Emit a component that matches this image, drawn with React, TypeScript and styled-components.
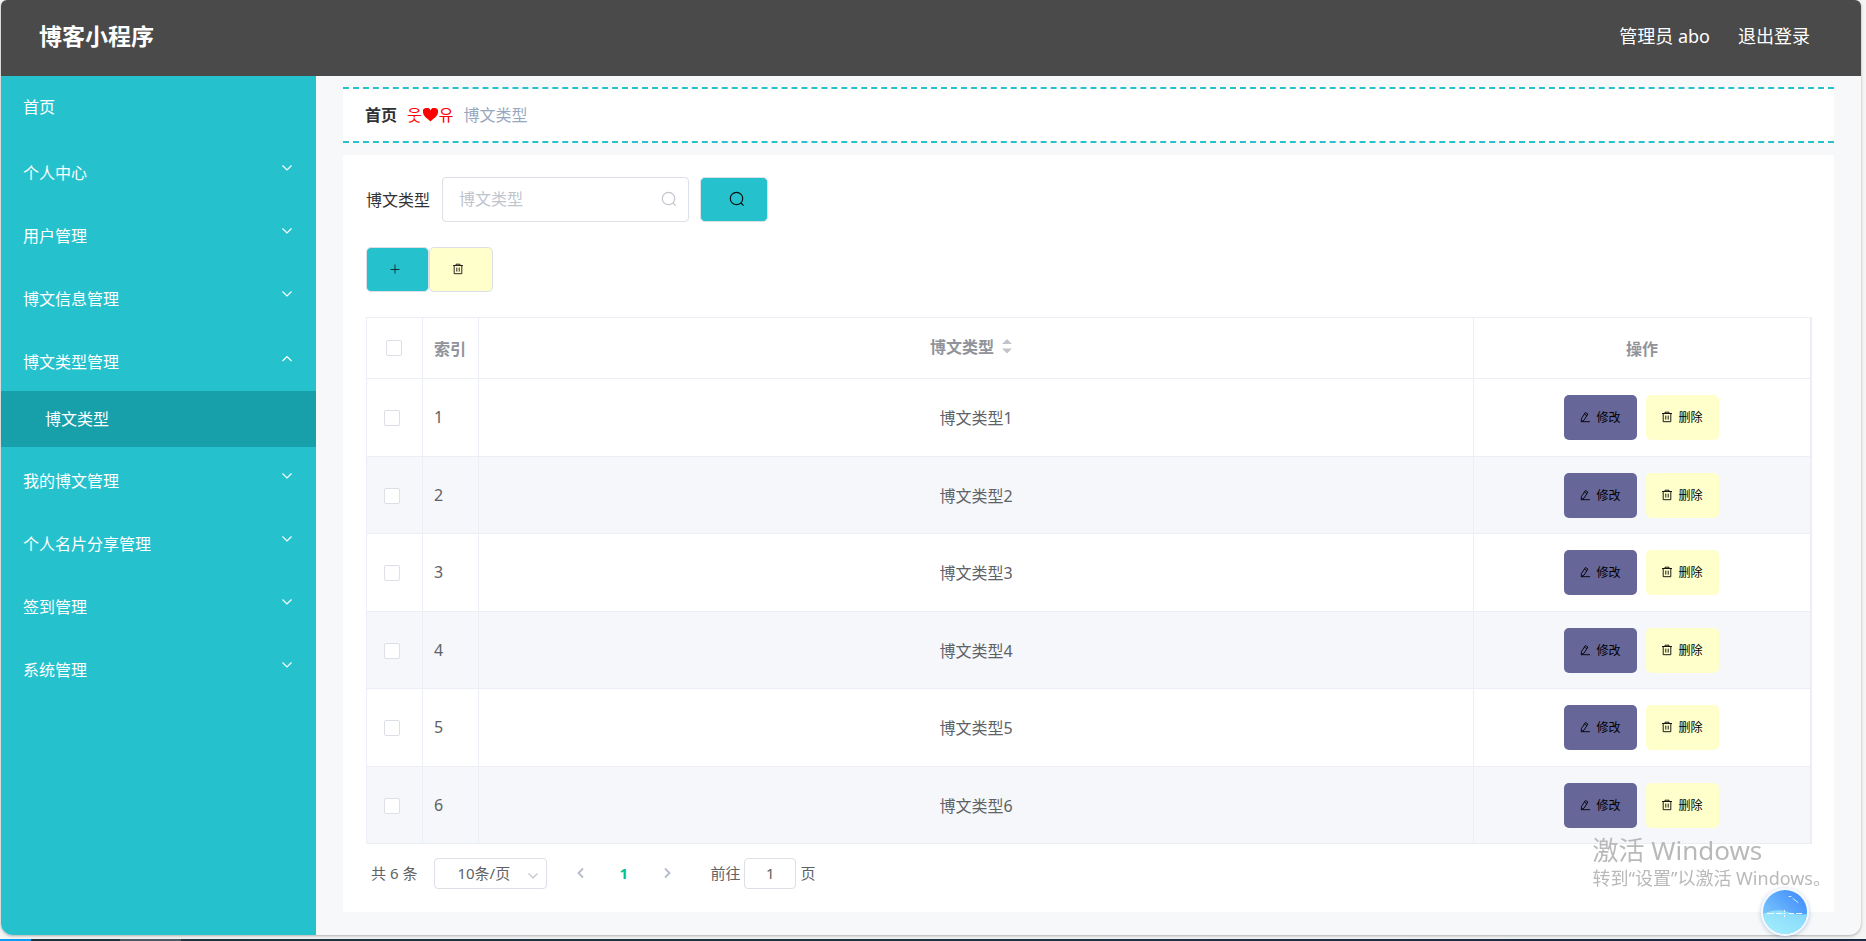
import React, { useState } from "react";
import styled, { createGlobalStyle } from "styled-components";

const teal = "#25c2ce";
const tealDark = "#18a0aa";
const line = "#ebeef5";
const edge = "#dcdfe6";

const Global = createGlobalStyle`
  *, *::before, *::after { box-sizing: border-box; }
  body {
    margin: 0;
    background: #f5f5f5;
    font-family: "Noto Sans", "Noto Sans CJK SC", "Noto Sans CJK KR", sans-serif;
    font-size: 16px;
    color: #303133;
  }
  button, input, select { font-family: inherit; margin: 0; }
  a { color: inherit; text-decoration: none; }
  ul { list-style: none; margin: 0; padding: 0; }
`;

const Page = styled.div`
  min-height: 100vh;
  display: flex;
  flex-direction: column;
`;

const Shell = styled.div`
  flex: 1;
  display: flex;
  flex-direction: column;
  margin: 0 5px 4px 1px;
  border-radius: 6px 6px 12px 12px;
  overflow: hidden;
  background: #f6f8fa;
  box-shadow: 0 1px 3px rgba(0, 0, 0, 0.3);
`;

const Header = styled.header`
  height: 76px;
  padding: 0 51px 4px 38px;
  display: flex;
  align-items: center;
  justify-content: space-between;
  background: #4a4a4a;
  color: #fff;
`;

const Brand = styled.h1`
  margin: 0;
  font-size: 23px;
  line-height: 32px;
  font-weight: 700;
`;

const Account = styled.div`
  display: flex;
  gap: 28px;
  font-size: 18px;
  line-height: 24px;
`;

const Body = styled.div`
  flex: 1;
  display: flex;
`;

const Sidebar = styled.nav`
  width: 315px;
  flex: none;
  background: ${teal};
  color: #fff;
`;

const MenuLink = styled.a`
  display: block;
  height: 63px;
  padding-left: 22px;
  line-height: 63px;
`;

const MenuGroup = styled.button`
  display: flex;
  justify-content: space-between;
  width: 100%;
  height: 63px;
  padding: 6px 23px 0 22px;
  border: 0;
  background: none;
  color: #fff;
  font-size: 16px;
  line-height: 56px;
  text-align: left;
  cursor: pointer;
  svg { margin-top: 17px; }
  &[aria-expanded="true"] svg { margin-top: 19px; }
`;

const SubLink = styled.a`
  display: block;
  height: 56px;
  padding-left: 44px;
  line-height: 56px;
  background: ${tealDark};
`;

const Main = styled.main`
  flex: 1;
  min-width: 0;
  padding: 11px 27px 23px;
  display: flex;
  flex-direction: column;
  gap: 12px;
`;

const Breadcrumb = styled.div`
  display: flex;
  align-items: center;
  gap: 10px;
  height: 56px;
  padding: 0 22px 2px;
  background: #fff;
  border-top: 2px dashed ${teal};
  border-bottom: 2px dashed ${teal};
  a { font-weight: 700; }
`;

const Separator = styled.span`
  color: #f00;
  display: flex;
  align-items: center;
  gap: 1px;
  svg { margin-top: 2px; }
`;

const Current = styled.span`
  color: #97a8be;
`;

const Panel = styled.section`
  flex: 1;
  padding: 22px 22px 23px 23px;
  background: #fff;
`;

const SearchForm = styled.form`
  display: flex;
  align-items: center;
  margin-bottom: 25px;
  label { margin-right: 12px; padding-bottom: 2px; }
`;

const SearchBox = styled.div`
  position: relative;
  width: 247px;
  margin-right: 11px;
  svg { position: absolute; right: 12px; top: 14px; color: #c0c4cc; }
`;

const SearchInput = styled.input`
  display: block;
  width: 100%;
  height: 45px;
  padding: 0 36px 2px 16px;
  border: 1px solid ${edge};
  border-radius: 4px;
  font-size: 16px;
  outline: none;
  &::placeholder { color: #c0c4cc; opacity: 1; }
`;

const ToolButton = styled.button<{ $fill: string; $width: number }>`
  display: flex;
  align-items: center;
  width: ${(p) => p.$width}px;
  height: 45px;
  padding: 0 0 2px ${(p) => (p.$width > 64 ? 28 : 22)}px;
  border: 1px solid ${edge};
  border-radius: 5px;
  background: ${(p) => p.$fill};
  color: #111;
  cursor: pointer;
`;

const Tools = styled.div`
  display: flex;
  margin-bottom: 25px;
`;

const Table = styled.table`
  width: 100%;
  table-layout: fixed;
  border-collapse: separate;
  border-spacing: 0;
  border: solid ${line};
  border-width: 1px 2px 0 1px;
  color: #606266;
  th, td {
    padding: 0 11px 1px;
    border-right: 1px solid ${line};
    border-bottom: 1px solid ${line};
    text-align: center;
    vertical-align: middle;
  }
  th:last-child, td:last-child { border-right: 0; }
  th { height: 61px; color: #909399; font-weight: 700; }
  th:first-child { padding: 0 0 0 19px; }
  td:first-child { padding: 1px 0 0 17px; }
  td:last-child { padding: 0 2px 0 0; }
  th:nth-child(2), td:nth-child(2) { text-align: left; }
  tbody tr:nth-child(odd) td { height: 78px; }
  tbody tr:nth-child(even) td { height: 77px; background: #f5f7fa; }
`;

const Col = styled.col<{ $width?: number }>`
  width: ${(p) => (p.$width ? `${p.$width}px` : "auto")};
`;

const Check = styled.input`
  appearance: none;
  display: block;
  width: 16px;
  height: 16px;
  border: 1px solid ${edge};
  border-radius: 2px;
  background: #fff;
  &:checked { background: ${teal}; border-color: ${teal}; }
`;

const SortButton = styled.button`
  display: inline-flex;
  align-items: center;
  gap: 8px;
  padding: 0 10px 4px 0;
  border: 0;
  background: none;
  color: inherit;
  font-size: 16px;
  font-weight: 700;
  cursor: pointer;
`;

const Actions = styled.div`
  display: flex;
  justify-content: center;
  gap: 9px;
`;

const RowButton = styled.button<{ $fill: string }>`
  display: flex;
  align-items: center;
  justify-content: center;
  gap: 5px;
  width: 73px;
  height: 45px;
  padding: 0 0 1px;
  border: 0;
  border-radius: 5px;
  background: ${(p) => p.$fill};
  color: #000;
  font-size: 12px;
  cursor: pointer;
`;

const Pagination = styled.div`
  display: flex;
  align-items: center;
  margin-top: 14px;
  padding-left: 5px;
  height: 31px;
  font-size: 15px;
  line-height: 20px;
  color: #606266;
  > span { padding-bottom: 2px; }
`;

const SizePicker = styled.div`
  position: relative;
  width: 113px;
  margin: 0 12px 0 17px;
  svg { position: absolute; right: 8px; top: 12px; color: #c0c4cc; pointer-events: none; }
`;

const SizeSelect = styled.select`
  appearance: none;
  display: block;
  width: 100%;
  height: 31px;
  padding: 0 24px 2px 22px;
  border: 1px solid ${edge};
  border-radius: 4px;
  background: #fff;
  color: #606266;
  font-size: 15px;
`;

const PageButton = styled.button<{ $active?: boolean }>`
  display: flex;
  align-items: center;
  justify-content: center;
  width: 43px;
  height: 31px;
  padding: 0 0 1px;
  border: 0;
  background: none;
  color: ${(p) => (p.$active ? "#00c292" : "#b4bccc")};
  font-size: 15px;
  font-weight: 700;
`;

const Jump = styled.label`
  display: flex;
  align-items: center;
  gap: 4px;
  margin-left: 22px;
  > span { padding-bottom: 2px; }
`;

const JumpInput = styled.input`
  width: 52px;
  height: 31px;
  padding: 0 0 2px;
  border: 1px solid ${edge};
  border-radius: 4px;
  color: #606266;
  font-size: 15px;
  text-align: center;
`;

const Watermark = styled.div`
  position: fixed;
  right: 35px;
  bottom: 51px;
  color: #b9b9b9;
  pointer-events: none;
  p { margin: 0; font-size: 18px; line-height: 24px; white-space: nowrap; }
  p:first-child { font-size: 26px; line-height: 32px; }
`;

const FloatBall = styled.button`
  position: fixed;
  right: 57px;
  bottom: 5px;
  width: 48px;
  height: 48px;
  padding: 0;
  border: 2px solid #f4f9ff;
  border-radius: 50%;
  background: none;
  box-shadow: 0 1px 4px rgba(60, 100, 150, 0.35);
  svg { display: block; }
`;

const Taskbar = styled.div`
  display: flex;
  height: 2px;
  background: linear-gradient(90deg, #1d3440, #1f3444 60%, #1b2a45);
`;

const Task = styled.span<{ $fill: string; $width: number; $gap?: number }>`
  width: ${(p) => p.$width}px;
  height: 2px;
  margin-left: ${(p) => p.$gap ?? 0}px;
  background: ${(p) => p.$fill};
`;

const Chevron = ({ d = "M1.5 3.5 6 8l4.5-4.5", size = 12, weight = 1.2 }) => (
  <svg width={size} height={size} viewBox="0 0 12 12" fill="none" stroke="currentColor" strokeWidth={weight} aria-hidden>
    <path d={d} />
  </svg>
);

const SearchIcon = () => (
  <svg width="16" height="16" viewBox="0 0 16 16" fill="none" stroke="currentColor" strokeWidth="1.2" aria-hidden>
    <circle cx="7.5" cy="7.5" r="6.2" />
    <path d="m12 12 2.6 2.6" />
  </svg>
);

const PlusIcon = () => (
  <svg width="12" height="12" viewBox="0 0 12 12" stroke="currentColor" strokeWidth="0.8" aria-hidden>
    <path d="M6 1.5v9M1.5 6.5h9" />
  </svg>
);

const TrashIcon = () => (
  <svg width="12" height="12" viewBox="0 0 12 12" fill="none" stroke="currentColor" strokeWidth="0.9" aria-hidden>
    <path d="M1 2.5h10M4 2.5V1.2h4v1.3M2.2 2.5v8.2h7.6V2.5M4.8 4.6v4M7.2 4.6v4" />
  </svg>
);

const EditIcon = () => (
  <svg width="12" height="12" viewBox="0 0 12 12" fill="none" stroke="currentColor" strokeWidth="0.9" aria-hidden>
    <path d="M6.4 1.5 8.9 3 5 9.2l-2.8 1.3.3-3.1zM5.4 3.1l2.5 1.5M2 10.7h9" />
  </svg>
);

const SortIcon = () => (
  <svg width="10" height="14" viewBox="0 0 10 14" fill="#c0c4cc" aria-hidden>
    <path d="M0 5 5 0l5 5zM0 9.500h10l-5 5z" />
  </svg>
);

const HeartIcon = () => (
  <svg width="15" height="14" viewBox="0 0 14 14" preserveAspectRatio="none" fill="currentColor" aria-hidden>
    <path d="M7 13.500C4.800 11.200 0 8 0 4.300A3.600 3.600 0 0 1 7 2.600a3.600 3.600 0 0 1 7 1.700C14 8 9.200 11.200 7 13.500z" />
  </svg>
);

const BallArt = () => (
  <svg width="44" height="44" viewBox="0 0 44 44" aria-hidden>
    <defs>
      <linearGradient id="sky" x1="0" y1="1" x2="1" y2="0">
        <stop offset="0.2" stopColor="#7cc8fc" />
        <stop offset="1" stopColor="#3a86fb" />
      </linearGradient>
      <linearGradient id="sea" x1="0" y1="1" x2="1" y2="0">
        <stop offset="0" stopColor="#a6f0fd" />
        <stop offset="1" stopColor="#82d6fc" />
      </linearGradient>
      <clipPath id="disc"><circle cx="22" cy="22" r="22" /></clipPath>
    </defs>
    <g clipPath="url(#disc)">
      <path fill="url(#sky)" d="M0 0h44v44H0z" />
      <path fill="url(#sea)" d="M0 24c8-4 18-5 25-2s13 3 19 2v20H0z" />
    </g>
    <path d="M4 23.500h7M13 23.500h6M26 23.500h5M33 23.500h6M21.500 20v2M21.500 25v2M20.500 23.500h2" stroke="#fff" strokeWidth="0.900" />
    <path d="M26 6.500h2M30 8.500l5 4" stroke="#d6ecff" strokeWidth="1" strokeLinecap="round" />
  </svg>
);

const before = ["个人中心", "用户管理", "博文信息管理"];
const after = ["我的博文管理", "个人名片分享管理", "签到管理", "系统管理"];
const rows = [1, 2, 3, 4, 5, 6];

const Group = ({ name }: { name: string }) => (
  <li>
    <MenuGroup type="button" aria-expanded={false}>
      {name}
      <Chevron />
    </MenuGroup>
  </li>
);

export default function App() {
  const [page, setPage] = useState("1");
  const [query, setQuery] = useState("");
  return (
    <Page>
      <Global />
      <Shell>
        <Header>
          <Brand>博客小程序</Brand>
          <Account>
            <span>管理员 abo</span>
            <a href="#logout">退出登录</a>
          </Account>
        </Header>
        <Body>
          <Sidebar>
            <ul>
              <li><MenuLink href="#home">首页</MenuLink></li>
              {before.map((name) => <Group key={name} name={name} />)}
              <li>
                <MenuGroup type="button" aria-expanded>
                  博文类型管理
                  <Chevron d="M1.5 8 6 3.500 10.500 8" />
                </MenuGroup>
                <SubLink href="#types">博文类型</SubLink>
              </li>
              {after.map((name) => <Group key={name} name={name} />)}
            </ul>
          </Sidebar>
          <Main>
            <Breadcrumb>
              <a href="#home">首页</a>
              <Separator>웃<HeartIcon />유</Separator>
              <Current>博文类型</Current>
            </Breadcrumb>
            <Panel>
              <SearchForm onSubmit={(e) => e.preventDefault()}>
                <label htmlFor="type">博文类型</label>
                <SearchBox>
                  <SearchInput id="type" placeholder="博文类型" value={query} onChange={(e) => setQuery(e.target.value)} />
                  <SearchIcon />
                </SearchBox>
                <ToolButton type="submit" aria-label="查询" $fill={teal} $width={68}><SearchIcon /></ToolButton>
              </SearchForm>
              <Tools>
                <ToolButton type="button" aria-label="新增" $fill={teal} $width={63}><PlusIcon /></ToolButton>
                <ToolButton type="button" aria-label="删除" $fill="#ffffcc" $width={64}><TrashIcon /></ToolButton>
              </Tools>
              <Table>
                <colgroup>
                  <Col $width={56} />
                  <Col $width={56} />
                  <Col />
                  <Col $width={336} />
                </colgroup>
                <thead>
                  <tr>
                    <th><Check type="checkbox" aria-label="全选" /></th>
                    <th>索引</th>
                    <th><SortButton type="button">博文类型<SortIcon /></SortButton></th>
                    <th>操作</th>
                  </tr>
                </thead>
                <tbody>
                  {rows.map((n) => (
                    <tr key={n}>
                      <td><Check type="checkbox" aria-label={`选择 ${n}`} /></td>
                      <td>{n}</td>
                      <td>博文类型{n}</td>
                      <td>
                        <Actions>
                          <RowButton type="button" $fill="#666699"><EditIcon />修改</RowButton>
                          <RowButton type="button" $fill="#ffffcc"><TrashIcon />删除</RowButton>
                        </Actions>
                      </td>
                    </tr>
                  ))}
                </tbody>
              </Table>
              <Pagination>
                <span>共 6 条</span>
                <SizePicker>
                  <SizeSelect aria-label="每页条数" defaultValue="10">
                    <option value="10">10条/页</option>
                    <option value="20">20条/页</option>
                  </SizeSelect>
                  <Chevron />
                </SizePicker>
                <PageButton type="button" aria-label="上一页"><Chevron d="M8 1.500 3.500 6 8 10.500" weight={1.8} /></PageButton>
                <PageButton type="button" $active>1</PageButton>
                <PageButton type="button" aria-label="下一页"><Chevron d="M4 1.500 8.500 6 4 10.500" weight={1.8} /></PageButton>
                <Jump>
                  <span>前往</span>
                  <JumpInput value={page} onChange={(e) => setPage(e.target.value)} />
                  <span>页</span>
                </Jump>
              </Pagination>
            </Panel>
          </Main>
        </Body>
      </Shell>
      <Taskbar>
        <Task $fill="#0a9cf5" $width={31} />
        <Task $fill="#4d5a66" $width={61} $gap={89} />
      </Taskbar>
      <Watermark>
        <p>激活 Windows</p>
        <p>转到“设置”以激活 Windows。</p>
      </Watermark>
      <FloatBall type="button" aria-label="助手"><BallArt /></FloatBall>
    </Page>
  );
}
